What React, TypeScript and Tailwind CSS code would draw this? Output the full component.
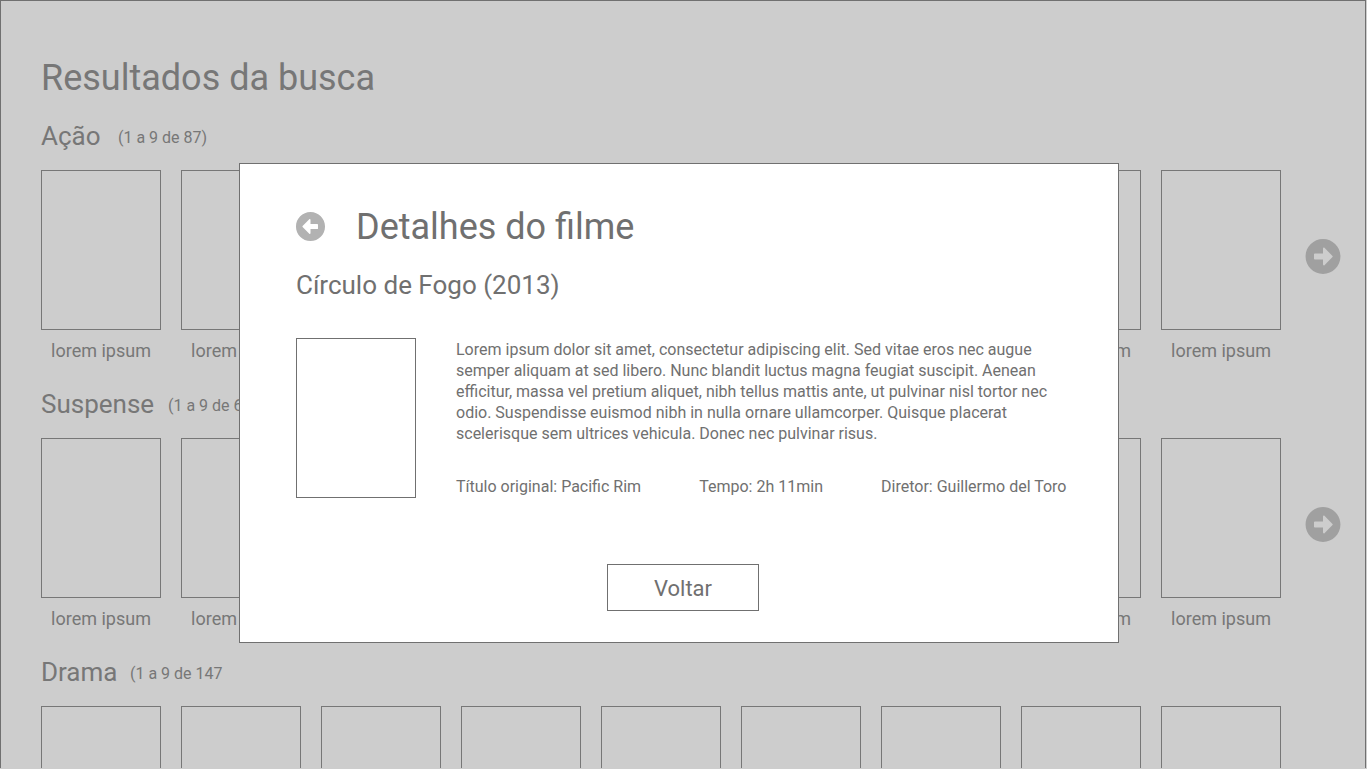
import { FaArrowAltCircleLeft, FaArrowAltCircleRight } from "react-icons/fa";

interface Section {
  title: string;
  count: string;
  titleWidth: string;
}

const sections: Section[] = [
  { title: "Ação", count: "(1 a 9 de 87)", titleWidth: "w-[77px]" },
  { title: "Suspense", count: "(1 a 9 de 65)", titleWidth: "w-[127px]" },
  { title: "Drama", count: "(1 a 9 de 147", titleWidth: "w-[89px]" },
];

const slots = [1, 2, 3, 4, 5, 6, 7, 8, 9];

function ResultRow({ section }: { section: Section }) {
  return (
    <section className="h-[268px] shrink-0">
      <div className="flex h-[30px] items-start">
        <h2 className={`${section.titleWidth} text-[26px] leading-[30px]`}>{section.title}</h2>
        <span className="pt-[7px] text-base leading-[19px]">{section.count}</span>
      </div>
      <div className="mt-[19px] flex items-start">
        <ul className="flex gap-5">
          {slots.map((slot) => (
            <li key={slot} className="w-[120px]">
              <div className="h-40 border border-[#777777]" />
              <p className="mt-[10px] text-center text-lg leading-[21px]">lorem ipsum</p>
            </li>
          ))}
        </ul>
        <button className="mt-[68px] ml-6" aria-label="Próximos">
          <FaArrowAltCircleRight className="size-9 translate-y-[0.5px] text-[#a0a0a0]" />
        </button>
      </div>
    </section>
  );
}

function MovieDialog() {
  return (
    <div
      role="dialog"
      className="absolute top-[163px] left-[239px] h-[480px] w-[880px] border border-[#707070] bg-white pt-[42px] pl-14 text-[#707070]"
    >
      <header className="flex h-[42px] items-center">
        <button aria-label="Fechar">
          <FaArrowAltCircleLeft className="size-[30px] -translate-x-[0.5px] -translate-y-[0.5px] text-[#b2b2b2]" />
        </button>
        <h2 className="ml-[30px] text-4xl leading-[42px]">Detalhes do filme</h2>
      </header>
      <h3 className="mt-[22px] text-[26px] leading-[30px]">Círculo de Fogo (2013)</h3>
      <div className="mt-[38px] flex gap-10">
        <div className="h-40 w-[120px] shrink-0 border border-[#707070]" />
        <div className="pt-px">
          <p className="w-[610px] text-base leading-[21px]">
            Lorem ipsum dolor sit amet, consectetur adipiscing elit. Sed vitae eros nec augue
            <br />
            semper aliquam at sed libero. Nunc blandit luctus magna feugiat suscipit. Aenean
            <br />
            efficitur, massa vel pretium aliquet, nibh tellus mattis ante, ut pulvinar nisl tortor nec
            <br />
            odio. Suspendisse euismod nibh in nulla ornare ullamcorper. Quisque placerat
            <br />
            scelerisque sem ultrices vehicula. Donec nec pulvinar risus.
          </p>
          <div className="mt-8 flex w-[610.5px] justify-between text-base leading-[21px]">
            <span>Título original: Pacific Rim</span>
            <span>Tempo: 2h 11min</span>
            <span>Diretor: Guillermo del Toro</span>
          </div>
        </div>
      </div>
      <button className="mt-[66px] ml-[311px] flex h-[47px] w-[152px] items-center justify-center border border-[#707070] pt-0.5 text-[22px] leading-[26px]">
        Voltar
      </button>
    </div>
  );
}

export default function App() {
  return (
    <div className="relative h-[769px] w-[1367px] overflow-hidden bg-[#cdcdcd] font-['Roboto',sans-serif] text-[#777777]">
      <main className="flex h-[768px] w-[1366px] flex-col overflow-hidden border-x border-t border-[#707070] pt-14 pl-10">
        <h1 className="mb-[22px] text-4xl leading-[42px]">Resultados da busca</h1>
        {sections.map((section) => (
          <ResultRow key={section.title} section={section} />
        ))}
      </main>
      <MovieDialog />
    </div>
  );
}
